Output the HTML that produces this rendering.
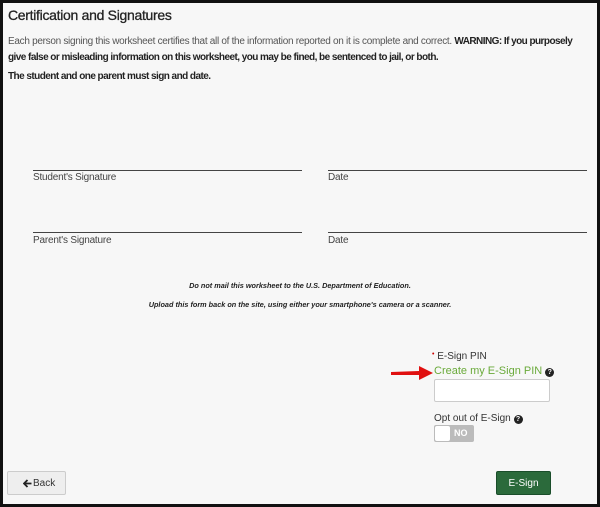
<!DOCTYPE html>
<html><head><style>
body{margin:0;width:600px;height:507px;overflow:hidden;font-family:"Liberation Sans",sans-serif;}
.f{position:absolute;left:0;top:0;width:594px;height:501px;border:3px solid #111;background:#f7f7f7;}
.a{position:absolute;white-space:nowrap;}
.ln{position:absolute;height:1px;background:#444;}
.lb{position:absolute;font-size:10px;color:#444;letter-spacing:-0.2px}
b{letter-spacing:-0.55px;color:#222}
</style></head><body><div class="f">
<div class="a" style="left:5px;top:4px;font-size:14px;color:#222;letter-spacing:-0.3px;-webkit-text-stroke:0.3px #222;">Certification and Signatures</div>
<div class="a" style="left:5px;top:31px;font-size:10px;line-height:16px;color:#555;letter-spacing:-0.3px">Each person signing this worksheet certifies that all of the information reported on it is complete and correct. <b>WARNING: If you purposely</b><br><b>give false or misleading information on this worksheet, you may be fined, be sentenced to jail, or both.</b></div>
<div class="a" style="left:5px;top:68px;font-size:10px;"><b>The student and one parent must sign and date.</b></div>
<div class="ln" style="left:30px;top:167px;width:269px"></div>
<div class="ln" style="left:325px;top:167px;width:259px"></div>
<div class="lb" style="left:30px;top:169px">Student's Signature</div>
<div class="lb" style="left:325px;top:169px">Date</div>
<div class="ln" style="left:30px;top:229px;width:269px"></div>
<div class="ln" style="left:325px;top:229px;width:259px"></div>
<div class="lb" style="left:30px;top:232px">Parent's Signature</div>
<div class="lb" style="left:325px;top:232px">Date</div>
<div class="a" style="left:0;width:594px;text-align:center;top:278px;font-size:7.3px;font-style:italic;font-weight:bold;color:#222;">Do not mail this worksheet to the U.S. Department of Education.</div>
<div class="a" style="left:0;width:594px;text-align:center;top:297px;font-size:7.3px;font-style:italic;font-weight:bold;color:#222;">Upload this form back on the site, using either your smartphone's camera or a scanner.</div>
<div class="a" style="left:429px;top:348px;font-size:10px;color:#333;"><span style="color:#c00;font-size:7px;vertical-align:top">•</span> E-Sign PIN</div>
<div class="a" style="left:431px;top:362px;font-size:11px;color:#6aaa3a;">Create my E-Sign PIN <span style="display:inline-block;width:9px;height:9px;border-radius:50%;background:#222;color:#fff;font-size:7px;text-align:center;line-height:9px;font-weight:bold;vertical-align:0">?</span></div>
<svg class="a" style="left:386px;top:362px" width="46" height="16"><path d="M2 7 L30 6 L30 1 L44 8 L30 15 L30 10 L2 10Z" fill="#e01010"/></svg>
<div class="a" style="left:431px;top:376px;width:114px;height:21px;background:#fff;border:1px solid #ccc;border-radius:2px;"></div>
<div class="a" style="left:431px;top:410px;font-size:10px;color:#333;">Opt out of E-Sign <span style="display:inline-block;width:9px;height:9px;border-radius:50%;background:#222;color:#fff;font-size:7px;text-align:center;line-height:9px;font-weight:bold">?</span></div>
<div class="a" style="left:431px;top:422px;width:40px;height:17px;background:#bbb;border-radius:2px;"><div style="position:absolute;left:1px;top:1px;width:15px;height:15px;background:#fff;border-radius:2px"></div><span style="position:absolute;left:20px;top:3px;font-size:9px;color:#fff;font-weight:bold">NO</span></div>
<div class="a" style="left:4px;top:468px;width:57px;height:22px;border:1px solid #ccc;background:#eee;border-radius:2px;font-size:10px;color:#333;line-height:22px;"><svg style="position:absolute;left:15px;top:7px" width="9" height="9" viewBox="0 0 9 9"><path d="M4.5 1 L1 4.5 L4.5 8 M1.5 4.5 H8.5" stroke="#222" stroke-width="1.8" fill="none"/></svg><span style="position:absolute;left:25px;top:1px">Back</span></div>
<div class="a" style="left:493px;top:468px;width:53px;height:22px;border:1px solid #1a4d2a;background:#2b6a3b;border-radius:2px;font-size:10px;color:#fff;text-align:center;line-height:24px;">E-Sign</div>
</div></body></html>
